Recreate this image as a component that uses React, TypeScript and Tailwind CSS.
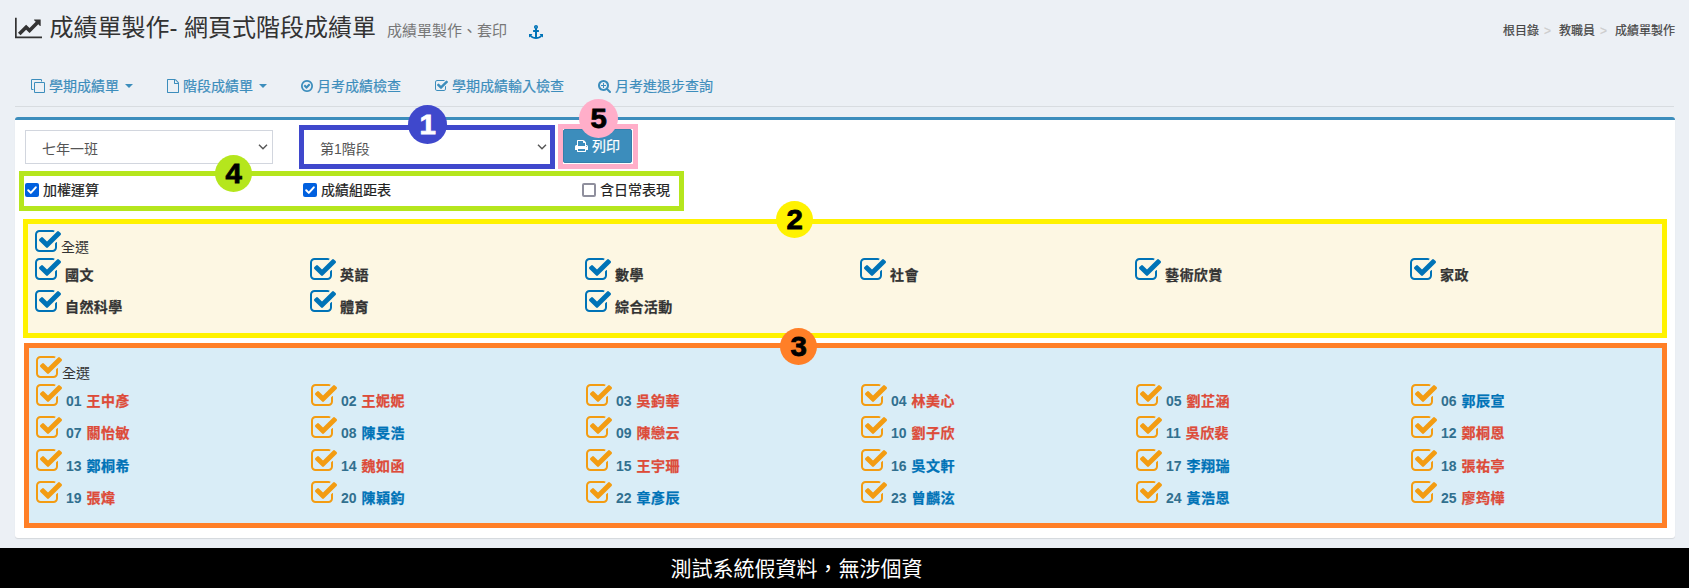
import React from "react";

const PATHS = {
  chart:
    "M2048 1536v128h-2048v-1536h128v1408h1920zm-128-1248v435q0 21-19.5 29.5t-35.5-7.5l-121-121-633 633q-10 10-23 10t-23-10l-233-233-416 416-192-192 585-585q10-10 23-10t23 10l233 233 464-464-121-121q-16-16-7.5-35.5t29.5-19.5h435q14 0 23 9t9 23z",
  checkSquare:
    "M1472 930v318q0 119-84.5 203.5t-203.5 84.5h-832q-119 0-203.5-84.5t-84.5-203.5v-832q0-119 84.5-203.5t203.5-84.5h832q63 0 117 25 15 7 18 23 3 17-9 29l-49 49q-10 10-23 10-3 0-9-2-23-6-45-6h-832q-66 0-113 47t-47 113v832q0 66 47 113t113 47h832q66 0 113-47t47-113v-254q0-13 9-22l64-64q10-10 23-10 6 0 12 3 20 8 20 29zm231-489l-814 814q-24 24-57 24t-57-24l-430-430q-24-24-24-57t24-57l110-110q24-24 57-24t57 24l263 263 647-647q24-24 57-24t57 24l110 110q24 24 24 57t-24 57z",
  print:
    "M448 1536h896v-256h-896v256zm0-640h896v-384h-160q-40 0-68-28t-28-68v-160h-640v640zm1152 64q0-26-19-45t-45-19-45 19-19 45 19 45 45 19 45-19 19-45zm128 0v416q0 13-9.5 22.5t-22.5 9.5h-224v160q0 40-28 68t-68 28h-960q-40 0-68-28t-28-68v-160h-224q-13 0-22.5-9.5t-9.5-22.5v-416q0-79 56.5-135.5t135.5-56.5h64v-544q0-40 28-68t68-28h672q40 0 88 20t76 48l152 152q28 28 48 76t20 88v256h64q79 0 135.5 56.5t56.5 135.5z",
  anchor:
    "M960 256q0-26-19-45t-45-19-45 19-19 45 19 45 45 19 45-19 19-45zm832 928v352q0 22-20 30-8 2-12 2-12 0-23-9l-93-93q-119 143-318.5 226.5t-429.5 83.5-429.5-83.5-318.5-226.5l-93 93q-9 9-23 9-4 0-12-2-20-8-20-30v-352q0-14 9-23t23-9h352q22 0 30 20 8 19-7 35l-100 100q67 91 189.5 153.5t271.5 82.5v-647h-192q-26 0-45-19t-19-45v-128q0-26 19-45t45-19h192v-163q-58-34-93-92.5t-35-128.5q0-106 75-181t181-75 181 75 75 181q0 70-35 128.5t-93 92.5v163h192q26 0 45 19t19 45v128q0 26-19 45t-45 19h-192v647q149-20 271.5-82.5t189.5-153.5l-100-100q-15-16-7-35 8-20 30-20h352q14 0 23 9t9 23z",
  checkCircle:
    "M1299 813l-422 422q-19 19-45 19t-45-19l-294-294q-19-19-19-45t19-45l102-102q19-19 45-19t45 19l147 147 275-275q19-19 45-19t45 19l102 102q19 19 19 45t-19 45zm141 83q0-148-73-273t-198-198-273-73-273 73-198 198-73 273 73 273 198 198 273 73 273-73 198-198 73-273zm224 0q0 209-103 385.5t-279.5 279.5-385.5 103-385.5-103-279.5-279.5-103-385.5 103-385.5 279.5-279.5 385.5-103 385.5 103 279.5 279.5 103 385.5z",
  searchPlus:
    "M1088 800v64q0 13-9.5 22.5t-22.5 9.5h-224v224q0 13-9.5 22.5t-22.5 9.5h-64q-13 0-22.5-9.5t-9.5-22.5v-224h-224q-13 0-22.5-9.5t-9.5-22.5v-64q0-13 9.5-22.5t22.5-9.5h224v-224q0-13 9.5-22.5t22.5-9.5h64q13 0 22.5 9.5t9.5 22.5v224h224q13 0 22.5 9.5t9.5 22.5zm128 32q0-185-131.5-316.5t-316.5-131.5-316.5 131.5-131.5 316.5 131.5 316.5 316.5 131.5 316.5-131.5 131.5-316.5zm512 832q0 53-37.5 90.5t-90.5 37.5q-54 0-90-38l-343-342q-179 124-399 124-143 0-273.5-55.5t-225-150-150-225-55.5-273.5 55.5-273.5 150-225 225-150 273.5-55.5 273.5 55.5 225 150 150 225 55.5 273.5q0 220-124 399l343 343q37 37 37 90z",
  clone:
    "M1664 1632v-1088q0-13-9.5-22.5t-22.5-9.5h-1088q-13 0-22.5 9.5t-9.5 22.5v1088q0 13 9.5 22.5t22.5 9.5h1088q13 0 22.5-9.5t9.5-22.5zm128-1088v1088q0 66-47 113t-113 47h-1088q-66 0-113-47t-47-113v-1088q0-66 47-113t113-47h1088q66 0 113 47t47 113zm-384-384v160h-128v-160q0-13-9.5-22.5t-22.5-9.5h-1088q-13 0-22.5 9.5t-9.5 22.5v1088q0 13 9.5 22.5t22.5 9.5h160v128h-160q-66 0-113-47t-47-113v-1088q0-66 47-113t113-47h1088q66 0 113 47t47 113z",
  file: "M1596 380q28 28 48 76t20 88v1152q0 40-28 68t-68 28h-1344q-40 0-68-28t-28-68v-1600q0-40 28-68t68-28h896q40 0 88 20t76 48zm-444-244v376h376q-10-29-22-41l-313-313q-12-12-41-22zm384 1528v-1024h-416q-40 0-68-28t-28-68v-416h-768v1536h1280z",
};

type IconName = keyof typeof PATHS;

function Icon({ name, box = "0 0 1792 1792", className }: { name: IconName; box?: string; className: string }) {
  return (
    <svg viewBox={box} fill="currentColor" className={`shrink-0 ${className}`} aria-hidden="true">
      <path d={PATHS[name]} />
    </svg>
  );
}

function Caret() {
  return <span className="mt-px ml-[6px] border-x-4 border-t-4 border-x-transparent border-t-[#3c8dbc]" />;
}

function Badge({ n, className }: { n: number; className: string }) {
  return (
    <span
      className={`absolute z-10 flex items-center justify-center rounded-full font-['Liberation_Sans',sans-serif] text-[28px] leading-none font-bold ${className}`}
    >
      <span className="scale-x-105 [-webkit-text-stroke:0.8px_currentColor]">{n}</span>
    </span>
  );
}

function Chevron() {
  return (
    <svg viewBox="0 0 10 6" className="h-[6px] w-[10px]" fill="none" stroke="#555" strokeWidth="1.4">
      <path d="M1 0.7l4 4 4-4" />
    </svg>
  );
}

function CheckBox({ checked, label, className }: { checked: boolean; label: string; className: string }) {
  return (
    <label className={`flex items-center gap-1 ${className}`}>
      {checked ? (
        <span className="flex size-[14px] items-center justify-center rounded-[2px] bg-[#0060df]">
          <svg viewBox="0 0 14 14" className="size-[14px]" fill="none" stroke="#fff" strokeWidth="2" strokeLinecap="round" strokeLinejoin="round">
            <path d="M3.2 7.3l2.6 2.6 5-5.6" />
          </svg>
        </span>
      ) : (
        <span className="size-[14px] rounded-[2px] border-2 border-[#8f8f9d] bg-white" />
      )}
      <span>{label}</span>
    </label>
  );
}

const SUBJECTS = [
  ["國文", "英語", "數學", "社會", "藝術欣賞", "家政"],
  ["自然科學", "體育", "綜合活動"],
];

const STUDENTS: [string, string, "f" | "m"][][] = [
  [["01", "王中彥", "f"], ["02", "王妮妮", "f"], ["03", "吳鈞華", "f"], ["04", "林美心", "f"], ["05", "劉芷涵", "f"], ["06", "郭辰宣", "m"]],
  [["07", "關怡敏", "f"], ["08", "陳旻浩", "m"], ["09", "陳戀云", "f"], ["10", "劉子欣", "f"], ["11", "吳欣裴", "f"], ["12", "鄭桐恩", "f"]],
  [["13", "鄭桐希", "m"], ["14", "魏如函", "f"], ["15", "王宇珊", "f"], ["16", "吳文軒", "m"], ["17", "李翔瑞", "m"], ["18", "張祐亭", "f"]],
  [["19", "張煒", "f"], ["20", "陳穎鈞", "m"], ["22", "章彥辰", "m"], ["23", "曾麟泫", "m"], ["24", "黃浩恩", "m"], ["25", "廖筠樺", "f"]],
];

const STUDENT_ROW_HEIGHTS = ["h-8", "h-[33px]", "h-8", "h-8"];

export default function App() {
  return (
    <div className="flex h-[588px] w-[1689px] flex-col overflow-hidden bg-[#ecf0f5] font-['Liberation_Sans','Noto_Sans_CJK_TC',sans-serif] text-sm leading-5 text-[#333]">
      <header className="flex h-[60px] items-start pr-[14px] pl-[15px]">
        <Icon name="chart" box="0 0 2048 1792" className="mt-4 h-6 w-[27.4px]" />
        <h1 className="mt-3 ml-[7px] text-2xl leading-8 whitespace-nowrap">成績單製作- 網頁式階段成績單</h1>
        <span className="mt-[21px] ml-[11px] text-[15px] text-[#777]">成績單製作、套印</span>
        <Icon name="anchor" className="mt-[25px] ml-[22px] size-[14px] text-[#0073b7]" />
        <nav className="mt-[21px] ml-auto flex text-xs leading-5 text-[#444] [-webkit-text-stroke:0.2px_currentColor]">
          <span>根目錄</span>
          <span className="w-5 pl-[5px] text-[#ccc]">&gt;</span>
          <span>教職員</span>
          <span className="w-5 pl-[5px] text-[#ccc]">&gt;</span>
          <span>成績單製作</span>
        </nav>
      </header>

      <nav className="mx-[15px] flex h-[47px] items-center border-b border-[#d8dce0] pt-[5px] pl-4 text-[#3c8dbc] [-webkit-text-stroke:0.2px_currentColor]">
        <a className="flex w-[136px] items-center">
          <Icon name="clone" className="mr-1 size-[14px]" />
          學期成績單
          <Caret />
        </a>
        <a className="flex w-[134px] items-center">
          <Icon name="file" box="128 0 1536 1792" className="mr-1 h-[14px] w-3" />
          階段成績單
          <Caret />
        </a>
        <a className="flex w-[134px] items-center">
          <Icon name="checkCircle" box="128 0 1536 1792" className="mr-1 h-[14px] w-3" />
          月考成績檢查
        </a>
        <a className="flex w-[163px] items-center">
          <Icon name="checkSquare" box="64 0 1664 1792" className="mr-1 h-[14px] w-[13px]" />
          學期成績輸入檢查
        </a>
        <a className="flex items-center">
          <Icon name="searchPlus" box="64 0 1664 1792" className="mr-1 h-[14px] w-[13px]" />
          月考進退步查詢
        </a>
      </nav>

      <main className="mt-[10px] mr-[14px] ml-[15px] flex h-[421px] flex-col rounded-[3px] border-t-[3px] border-[#3c8dbc] bg-white shadow-[0_1px_1px_rgba(0,0,0,0.1)]">
        <div className="flex h-[51px] items-start text-[#555]">
          <div className="mt-[10px] ml-[10px] flex h-[34px] w-[248px] items-center justify-between border border-[#d2d6de] pr-1 pl-4">
            <span className="pt-[3px]">七年一班</span>
            <Chevron />
          </div>
          <div className="relative mt-[5px] ml-[26px] flex h-11 w-[256px] items-center justify-between border-[5px] border-[#3f48cc] pr-[3px] pl-4">
            <span className="pt-[3px]">第1階段</span>
            <Chevron />
            <Badge n={1} className="-top-[25px] left-[104px] size-[39px] bg-[#3f48cc] text-white" />
          </div>
          <div className="relative mt-1 ml-[3px] flex h-[45px] w-20 items-start border-[5px] border-[#ffaec9]">
            <button className="flex h-[34px] w-[69px] items-center rounded-[2px] border border-[#367fa9] bg-[#3c8dbc] pl-[11px] text-white [-webkit-text-stroke:0.2px_currentColor]">
              <Icon name="print" box="64 0 1664 1792" className="mr-1 h-[14px] w-[13px]" />
              列印
            </button>
            <Badge n={5} className="-top-[30px] left-4 size-[39px] bg-[#ffaec9] text-black" />
          </div>
        </div>

        <div className="relative ml-1 flex h-10 w-[665px] shrink-0 items-center border-[5px] border-[#b5e61d] pb-[2px] pl-px text-[#222] [-webkit-text-stroke:0.2px_currentColor]">
          <CheckBox checked label="加權運算" className="w-[278px]" />
          <CheckBox checked label="成績組距表" className="w-[279px]" />
          <CheckBox checked={false} label="含日常表現" className="" />
          <Badge n={4} className="-top-[21px] left-[191px] size-[37px] bg-[#b5e61d] text-black" />
        </div>

        <section className="relative mt-2 ml-2 h-[119px] w-[1644px] shrink-0 border-[5px] border-[#fff200] bg-[#fdf7e3] pt-1 pl-[6px]">
          <div className="flex h-7 items-start">
            <Icon name="checkSquare" className="size-7 text-[#0073b7]" />
            <span className="-ml-px mt-[9px]">全選</span>
          </div>
          {SUBJECTS.map((row, i) => (
            <div key={i} className="flex h-8 items-start">
              {row.map((s) => (
                <div key={s} className="flex w-[275px] shrink-0 items-start gap-[3px]">
                  <Icon name="checkSquare" className="size-7 text-[#0073b7]" />
                  <span className="mt-[9px] font-bold tracking-[0.4px] [-webkit-text-stroke:0.25px_currentColor]">{s}</span>
                </div>
              ))}
            </div>
          ))}
          <Badge n={2} className="-top-[23px] left-[748px] size-[37px] bg-[#fff200] text-black" />
        </section>

        <section className="relative mt-[5px] ml-[9px] h-[185px] w-[1643px] shrink-0 border-[5px] border-[#ff7f27] bg-[#d9edf7] pt-[6px] pl-[6px]">
          <div className="flex h-7 items-start">
            <Icon name="checkSquare" className="size-7 text-[#f39c12]" />
            <span className="-ml-px mt-[9px]">全選</span>
          </div>
          {STUDENTS.map((row, i) => (
            <div key={i} className={`flex items-start ${STUDENT_ROW_HEIGHTS[i]}`}>
              {row.map(([no, name, sex]) => (
                <div key={no} className="flex w-[275px] shrink-0 items-start font-bold">
                  <Icon name="checkSquare" className="mr-[3px] size-7 text-[#f39c12]" />
                  <span className="mt-[9px] mr-[5px] text-[#31708f]">{no}</span>
                  <span
                    className={`mt-[9px] tracking-[0.4px] [-webkit-text-stroke:0.25px_currentColor] ${sex === "f" ? "text-[#dd4b39]" : "text-[#0073b7]"}`}
                  >
                    {name}
                  </span>
                </div>
              ))}
            </div>
          ))}
          <Badge n={3} className="-top-5 left-[751px] size-[37px] bg-[#ff7f27] text-black" />
        </section>
      </main>

      <footer className="mt-auto flex h-10 items-center justify-center bg-black pt-px pr-[96px] text-[21px] text-white">
        測試系統假資料，無涉個資
      </footer>
    </div>
  );
}
